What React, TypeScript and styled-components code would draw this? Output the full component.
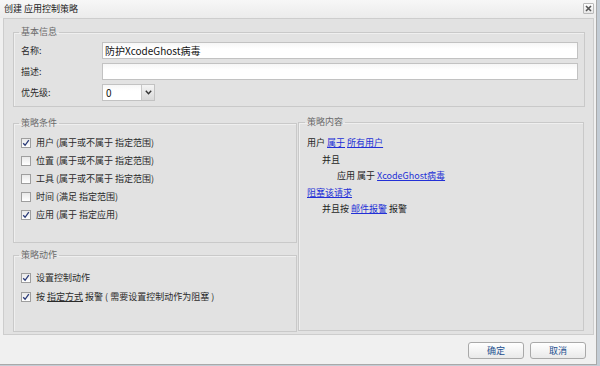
import React from "react";
import styled, { createGlobalStyle } from "styled-components";

const GlobalStyle = createGlobalStyle`
  html, body { margin: 0; padding: 0; }
  body {
    background: #c3ccd5;
    font-family: "Noto Sans CJK SC", "Noto Sans", sans-serif;
    font-size: 9px;
    color: #222;
  }
  * { box-sizing: border-box; }
`;

const Window = styled.div`
  width: 597px;
  height: 365px;
  background: #f0f0f0;
  border-right: 1px solid #a9a9a9;
  border-bottom: 1px solid #a9a9a9;
  display: flex;
  flex-direction: column;
`;

const TitleBar = styled.div`
  height: 18px;
  flex: none;
  display: flex;
  align-items: center;
  justify-content: space-between;
  padding: 0 2px 0 4px;
  background: linear-gradient(#f7f7f7, #ebebeb);
  color: #1a1a1a;
  font-size: 9px;
  line-height: 12px;
`;

const CloseButton = styled.span`
  width: 11px;
  height: 11px;
  margin-top: -2px;
  border: 1px solid #b9b9b9;
  border-radius: 1px;
  background: linear-gradient(#fdfdfd, #e6e6e6);
  display: flex;
  align-items: center;
  justify-content: center;
`;

const Panel = styled.div`
  height: 317px;
  flex: none;
  margin: 0 2px 0 3px;
  border: 1px solid #cdcdcd;
  background: #e2e2e2;
  padding: 7px 8px 0 9px;
  display: flex;
  flex-direction: column;
`;

const Group = styled.fieldset<{ $h: number; $pl?: number; $mt?: number }>`
  margin: ${(p) => p.$mt ?? 0}px 0 0 0;
  padding: 0 6px 0 ${(p) => p.$pl ?? 7}px;
  height: ${(p) => p.$h}px;
  min-width: 0;
  border: 1px solid #c9c9c9;
  box-shadow: inset 1px 1px 0 #efefef;
  border-radius: 0;
`;

const Legend = styled.legend`
  margin-left: -2px;
  padding: 0 2px;
  font-size: 9px;
  line-height: 12px;
  color: #6a6a6a;
`;

const FormGrid = styled.div`
  display: grid;
  grid-template-columns: 81px 1fr;
  grid-auto-rows: 17px;
  row-gap: 4px;
  padding-top: 4px;
  align-items: center;
`;

const Label = styled.label`
  color: #2a2a2a;
  line-height: 12px;
`;

const TextBox = styled.div`
  height: 17px;
  border: 1px solid #c2c2c2;
  background: linear-gradient(#f6f6f6, #ffffff 40%);
  font-size: 10px;
  line-height: 15px;
  padding-left: 2px;
  color: #111;
`;

const Select = styled.div`
  width: 53px;
  height: 17px;
  display: flex;
  border: 1px solid #c2c2c2;
  background: #fff;
`;

const SelectValue = styled.span`
  flex: 1;
  font-size: 10px;
  line-height: 15px;
  padding-left: 3px;
  color: #111;
  background: linear-gradient(#f6f6f6, #ffffff 40%);
`;

const SelectArrow = styled.span`
  width: 13px;
  border-left: 1px solid #c8c8c8;
  background: linear-gradient(#f4f4f4, #d9d9d9);
  display: flex;
  align-items: center;
  justify-content: center;
`;

const Columns = styled.div`
  display: grid;
  grid-template-columns: 284px 286px;
  column-gap: 1px;
  margin-top: 9px;
  align-items: start;
`;

const LeftColumn = styled.div`
  display: flex;
  flex-direction: column;
`;

const CheckList = styled.div<{ $row: number; $pt: number }>`
  display: flex;
  flex-direction: column;
  padding-top: ${(p) => p.$pt}px;
  & > * { height: ${(p) => p.$row}px; }
`;

const CheckRow = styled.div`
  display: flex;
  align-items: center;
  gap: 5px;
  color: #2a2a2a;
  line-height: 12px;
  white-space: nowrap;
`;

const Box = styled.span`
  width: 10px;
  height: 10px;
  flex: none;
  border: 1px solid #9e9e9e;
  background: linear-gradient(#e9e9e9, #ffffff);
  display: flex;
  align-items: center;
  justify-content: center;
`;

const Plain = styled.span`
  text-decoration: underline;
  color: #2a2a2a;
`;

const RuleList = styled.div`
  padding-top: 7px;
  display: flex;
  flex-direction: column;
`;

const RuleLine = styled.div<{ $indent: number }>`
  line-height: 16.5px;
  padding-left: ${(p) => p.$indent * 15}px;
  color: #1e1e1e;
  white-space: nowrap;
`;

const Link = styled.a`
  color: #2330d6;
  text-decoration: underline;
  cursor: pointer;
`;

const Footer = styled.div`
  flex: 1;
  display: flex;
  justify-content: flex-end;
  align-items: flex-start;
  gap: 6px;
  padding: 7px 10px 0 0;
`;

const Button = styled.button`
  width: 56px;
  height: 17px;
  padding: 0;
  border: 1px solid #a9a9a9;
  border-radius: 3px;
  background: linear-gradient(#ffffff, #e9e9e9);
  color: #24508f;
  font-family: inherit;
  font-size: 9px;
  line-height: 15px;
`;

const Check: React.FC<{ checked?: boolean }> = ({ checked }) => (
  <Box>
    {checked && (
      <svg width="8" height="8" viewBox="0 0 8 8">
        <path d="M1.2 4.2 L3.1 6.3 L6.8 1.2" fill="none" stroke="#2b3b78" strokeWidth="1.3" />
      </svg>
    )}
  </Box>
);

const conditions: { text: string; checked: boolean }[] = [
  { text: "用户 (属于或不属于 指定范围)", checked: true },
  { text: "位置 (属于或不属于 指定范围)", checked: false },
  { text: "工具 (属于或不属于 指定范围)", checked: false },
  { text: "时间 (满足 指定范围)", checked: false },
  { text: "应用 (属于 指定应用)", checked: true },
];

export default function App() {
  return (
    <>
      <GlobalStyle />
      <Window>
        <TitleBar>
          <span>创建 应用控制策略</span>
          <CloseButton>
            <svg width="7" height="7" viewBox="0 0 7 7">
              <path d="M1 1 L6 6 M6 1 L1 6" stroke="#555" strokeWidth="1.6" />
            </svg>
          </CloseButton>
        </TitleBar>
        <Panel>
          <Group $h={81}>
            <Legend>基本信息</Legend>
            <FormGrid>
              <Label>名称:</Label>
              <TextBox>防护XcodeGhost病毒</TextBox>
              <Label>描述:</Label>
              <TextBox />
              <Label>优先级:</Label>
              <Select>
                <SelectValue>0</SelectValue>
                <SelectArrow>
                  <svg width="7" height="5" viewBox="0 0 7 5">
                    <path d="M0.8 0.8 L3.5 3.8 L6.2 0.8" fill="none" stroke="#333" strokeWidth="1.4" />
                  </svg>
                </SelectArrow>
              </Select>
            </FormGrid>
          </Group>
          <Columns>
            <LeftColumn>
              <Group $h={126} $mt={1}>
                <Legend>策略条件</Legend>
                <CheckList $row={18} $pt={5}>
                  {conditions.map((c) => (
                    <CheckRow key={c.text}>
                      <Check checked={c.checked} />
                      <span>{c.text}</span>
                    </CheckRow>
                  ))}
                </CheckList>
              </Group>
              <Group $h={83} $mt={6}>
                <Legend>策略动作</Legend>
                <CheckList $row={19} $pt={7}>
                  <CheckRow>
                    <Check checked />
                    <span>设置控制动作</span>
                  </CheckRow>
                  <CheckRow>
                    <Check checked />
                    <span>
                      按 <Plain>指定方式</Plain> 报警 ( 需要设置控制动作为阻塞 )
                    </span>
                  </CheckRow>
                </CheckList>
              </Group>
            </LeftColumn>
            <Group $h={215} $pl={8}>
              <Legend>策略内容</Legend>
              <RuleList>
                <RuleLine $indent={0}>
                  用户 <Link>属于</Link> <Link>所有用户</Link>
                </RuleLine>
                <RuleLine $indent={1}>并且</RuleLine>
                <RuleLine $indent={2}>
                  应用 属于 <Link>XcodeGhost病毒</Link>
                </RuleLine>
                <RuleLine $indent={0}>
                  <Link>阻塞该请求</Link>
                </RuleLine>
                <RuleLine $indent={1}>
                  并且按 <Link>邮件报警</Link> 报警
                </RuleLine>
              </RuleList>
            </Group>
          </Columns>
        </Panel>
        <Footer>
          <Button>确定</Button>
          <Button>取消</Button>
        </Footer>
      </Window>
    </>
  );
}
